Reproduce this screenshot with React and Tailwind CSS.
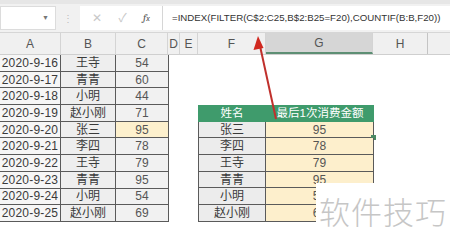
import React from "react";

const left = [
  ["2020-9-16", "王寺", "54"],
  ["2020-9-17", "青青", "60"],
  ["2020-9-18", "小明", "44"],
  ["2020-9-19", "赵小刚", "71"],
  ["2020-9-20", "张三", "95"],
  ["2020-9-21", "李四", "78"],
  ["2020-9-22", "王寺", "79"],
  ["2020-9-23", "青青", "95"],
  ["2020-9-24", "小明", "54"],
  ["2020-9-25", "赵小刚", "69"],
];

const right = [
  ["张三", "95"],
  ["李四", "78"],
  ["王寺", "79"],
  ["青青", "95"],
  ["小明", "54"],
  ["赵小刚", "69"],
];

const font = { fontFamily: '"Liberation Sans", "Noto Sans CJK SC", sans-serif' };

export default function App() {
  return (
    <div
      className="relative w-[450px] h-[249px] overflow-hidden bg-white text-[#3a3a3a]"
      style={font}
    >
      {/* top strip */}
      <div className="h-[4px] bg-[#e6e6e6]" />
      {/* formula bar */}
      <div className="h-[29px] bg-[#f1f1f1] flex items-center border-b border-[#d6d6d6]">
        <div className="w-[56px] h-[24px] bg-white border border-[#dcdcdc] flex items-center justify-end pr-[6px]">
          <span className="text-[7px] text-[#777]">▼</span>
        </div>
        <div className="w-[24px] flex justify-center text-[#bdbdbd] text-[10px]">⋮</div>
        <div className="w-[83px] h-[24px] bg-white flex items-center justify-around px-[4px] border-r border-[#d6d6d6]">
          <span className="text-[12px] text-[#c8c8c8]">✕</span>
          <span className="text-[12px] text-[#c8c8c8]">✓</span>
          <span className="text-[11px] italic text-[#555] font-serif">f<span className="text-[8px]">x</span></span>
        </div>
        <div className="flex-1 h-[24px] bg-white flex items-center pl-[9px] text-[9.7px] text-[#333] whitespace-nowrap">
          =INDEX(FILTER(C$2:C25,B$2:B25=F20),COUNTIF(B:B,F20))
        </div>
      </div>
      {/* column headers */}
      <div className="h-[22px] bg-[#f0f0f0] flex text-[12px] text-[#555] border-b border-[#cfcfcf]">
        {[
          ["A", "w-[61px]"],
          ["B", "w-[55px]"],
          ["C", "w-[52px]"],
          ["D", "w-[12px]"],
          ["E", "w-[18px]"],
          ["F", "w-[68px]"],
        ].map(([l, w]) => (
          <div key={l} className={`${w} flex items-center justify-center border-r border-[#d4d4d4]`}>
            {l}
          </div>
        ))}
        <div className="w-[107px] flex items-center justify-center bg-[#d6d6d6] border-b-2 border-[#5d8f74] border-r border-r-[#d4d4d4]">
          G
        </div>
        <div className="w-[55px] flex items-center justify-center border-r border-[#c4c4c4]">H</div>
        <div className="flex-1" />
      </div>
      {/* body */}
      <div className="flex">
        <div className="w-[169px] border-r border-[#5a5a5a]">
          {left.map(([d, n, v], i) => (
            <div key={i} className="h-[16.7px] flex border-b border-[#5a5a5a] text-[12px] leading-none">
              <div className="w-[61px] flex items-center justify-center bg-[#f6f6f6] border-r border-[#5a5a5a] tracking-[0.2px]">
                {d}
              </div>
              <div className="w-[55px] flex items-center justify-center bg-[#eeeeee] border-r border-[#5a5a5a]">
                {n}
              </div>
              <div
                className={`flex-1 flex items-center justify-center ${
                  i === 4 ? "bg-[#fdf0cd]" : "bg-[#f1f1f1]"
                } text-[#555]`}
              >
                {v}
              </div>
            </div>
          ))}
        </div>
        <div className="w-[29px]" />
        <div className="w-[176px] mt-[50px]">
          <div className="h-[16.7px] flex bg-[#3f9b6c] text-white text-[11.5px] leading-none">
            <div className="w-[68px] flex items-center justify-center">姓名</div>
            <div className="flex-1 flex items-center justify-center">最后1次消费金额</div>
          </div>
          {right.map(([n, v], i) => (
            <div key={i} className="h-[16.7px] flex border-b border-[#5a5a5a] text-[12px] leading-none">
              <div className="w-[68px] flex items-center justify-center bg-[#ececec] border-l border-r border-[#5a5a5a]">
                {n}
              </div>
              <div className="relative flex-1 flex items-center justify-center bg-[#fdefcc] border-r border-[#5a5a5a] text-[#555]">
                {v}
                {i === 0 && (
                  <div className="absolute -right-[3px] -bottom-[3px] w-[5px] h-[5px] bg-[#4b8a64]" />
                )}
              </div>
            </div>
          ))}
        </div>
      </div>
      {/* watermark */}
      <div className="absolute left-[316px] top-[183px] w-[134px] h-[56px] bg-white flex items-center justify-center">
        <span
          className="text-[31px] text-[#c6c6c6] tracking-[1px] font-light"
          style={{ fontFamily: '"Noto Sans CJK SC", sans-serif' }}
        >
          软件技巧
        </span>
      </div>
      {/* arrow */}
      <svg className="absolute left-0 top-0" width="450" height="249" viewBox="0 0 450 249">
        <line x1="276" y1="119" x2="260" y2="46" stroke="#c0302c" strokeWidth="2" />
        <polygon points="258,36 253.5,50 263.5,48" fill="#d0281f" />
      </svg>
    </div>
  );
}
